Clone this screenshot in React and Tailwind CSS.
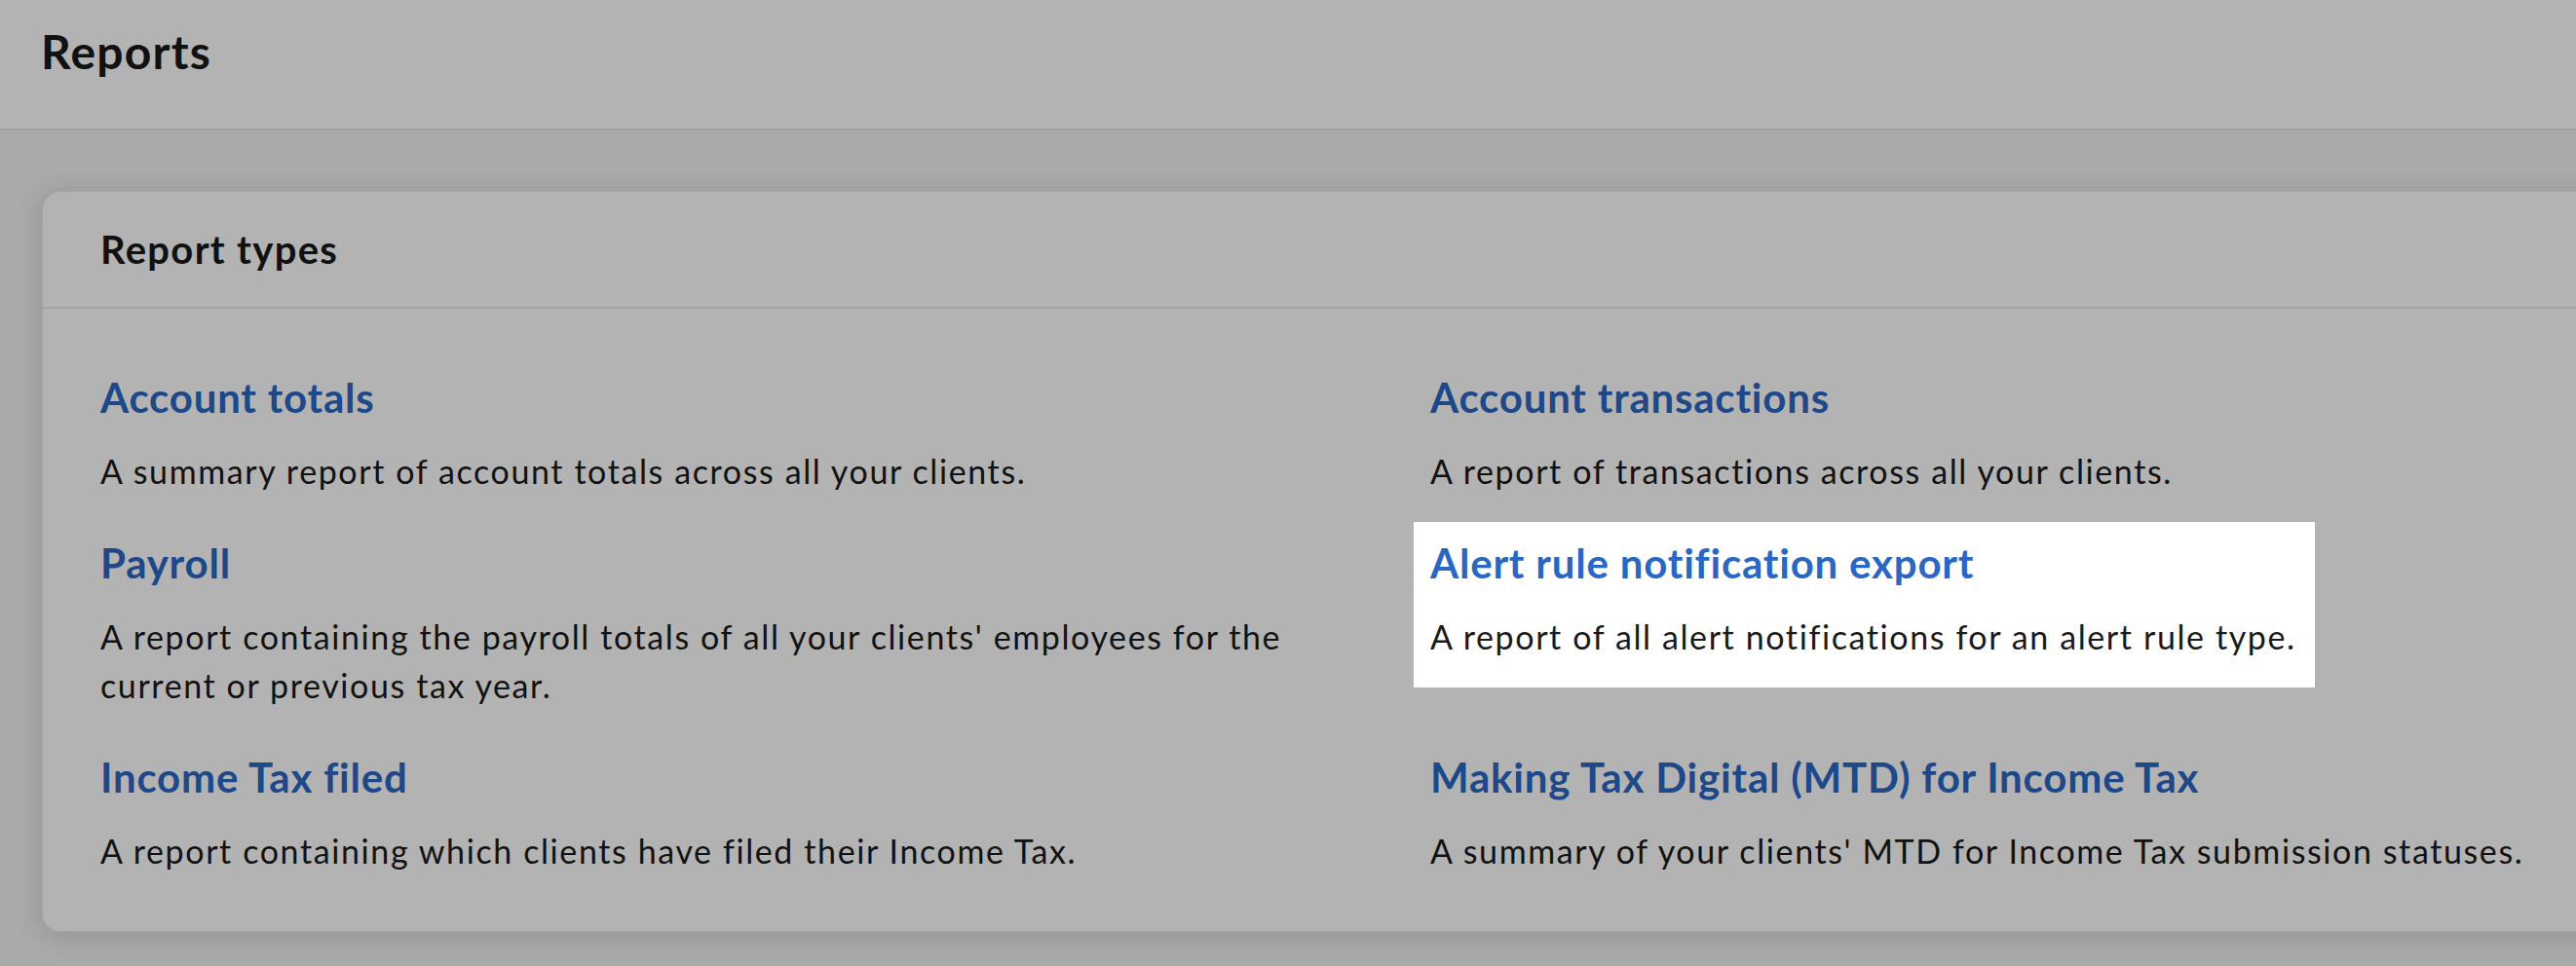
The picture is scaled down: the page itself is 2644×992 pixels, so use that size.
const reports = [
  {
    title: "Account totals",
    text: "A summary report of account totals across all your clients.",
  },
  {
    title: "Account transactions",
    text: "A report of transactions across all your clients.",
  },
  {
    title: "Payroll",
    text: "A report containing the payroll totals of all your clients' employees for the current or previous tax year.",
  },
  {
    title: "Alert rule notification export",
    text: "A report of all alert notifications for an alert rule type.",
    active: true,
  },
  {
    title: "Income Tax filed",
    text: "A report containing which clients have filed their Income Tax.",
  },
  {
    title: "Making Tax Digital (MTD) for Income Tax",
    text: "A summary of your clients' MTD for Income Tax submission statuses.",
  },
];

function ReportItem({ report }) {
  return (
    <div className="flex items-start">
      <a
        href="#"
        className={`block pl-[17px] pr-[19px] pt-[17px] pb-[27px] ${
          report.active ? "bg-white" : ""
        }`}
      >
        <div
          className={`text-[42px] leading-[50px] font-bold tracking-[0.8px] ${
            report.active ? "text-[#2a67c4]" : "text-[#1d4889]"
          }`}
        >
          {report.title}
        </div>
        <p
          className={`mt-[26px] max-w-[1260px] text-[34px] leading-[50px] tracking-[1.6px] ${
            report.active ? "text-[#1a1a1a]" : "text-[#121212]"
          }`}
        >
          {report.text}
        </p>
      </a>
    </div>
  );
}

export default function App() {
  return (
    <div
      className="h-[992px] w-full overflow-hidden bg-[#a9aaaa]"
      style={{ fontFamily: "Lato, 'Open Sans', sans-serif" }}
    >
      <header className="h-[134px] border-b-2 border-[#a2a2a6] bg-[#b3b3b3] px-[42px] pt-[29px]">
        <h1 className="text-[48px] leading-[48px] font-bold tracking-[1.2px] text-[#111]">Reports</h1>
      </header>

      <main className="pl-[42px] pt-[61px]">
        <section className="w-[2818px] rounded-[20px] border-2 border-[#a2a2a6] bg-[#b3b3b3] shadow-[0_4px_28px_rgba(0,0,0,0.14)]">
          <div className="flex h-[120px] items-center border-b-2 border-[#a2a2a6] px-[59px]">
            <h2 className="text-[40px] leading-[48px] font-bold tracking-[1.3px] text-[#111]">Report types</h2>
          </div>
          <div className="grid grid-cols-2 px-[42px] pt-[49px] pb-[30px]">
            {reports.map((r) => (
              <ReportItem key={r.title} report={r} />
            ))}
          </div>
        </section>
      </main>
    </div>
  );
}
